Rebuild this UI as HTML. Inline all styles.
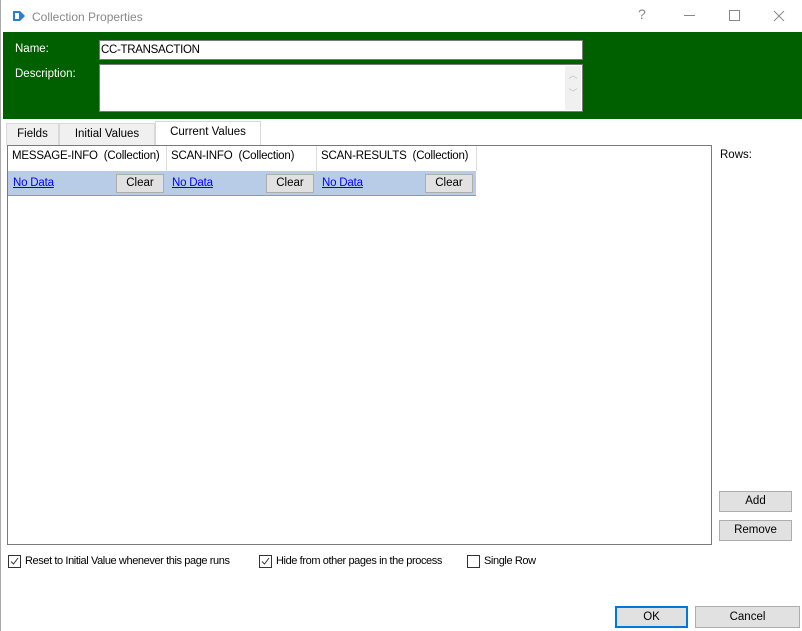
<!DOCTYPE html>
<html><head><style>
*{box-sizing:border-box}
body{margin:0;width:802px;height:631px;background:#fff;font-family:"Liberation Sans",sans-serif;font-size:11.5px;position:relative;overflow:hidden;color:#000}
.a{position:absolute}
.btn{position:absolute;background:#e1e1e1;border:1px solid #adadad;text-align:center;font-size:11.5px}
.tab{position:absolute;top:123px;height:22px;border:1px solid #d9d9d9;border-bottom:none;background:#f0f0f0;text-align:center;line-height:21px;font-size:11.5px}
.cb{position:absolute;top:555px;width:13px;height:13px;border:1px solid #333;background:#fff}
.lbl{position:absolute;top:555px;font-size:11px;letter-spacing:-0.4px}
a{color:#00f;text-decoration:underline}
.h{letter-spacing:-0.2px}
</style></head><body>
<div class="a" style="left:0;top:0;width:1px;height:631px;background:#aaa"></div>
<svg class="a" style="left:12px;top:9px" width="14" height="14"><path d="M1 2h7l5 5-5 5H1z" fill="#2a7fd4"/><rect x="3" y="4" width="4" height="6" fill="#fff"/></svg>
<div class="a" style="left:32px;top:10px;font-size:12px;color:#888">Collection Properties</div>
<div class="a" style="left:638px;top:6px;color:#888;font-size:14px">?</div>
<div class="a" style="left:684px;top:15px;width:11px;height:1px;background:#888"></div>
<div class="a" style="left:729px;top:10px;width:11px;height:11px;border:1px solid #888"></div>
<svg class="a" style="left:773px;top:10px" width="12" height="12"><path d="M1 1L11 11M11 1L1 11" stroke="#888"/></svg>
<div class="a" style="left:3px;top:32px;width:799px;height:87px;background:#006000"></div>
<div class="a" style="left:15px;top:43px;color:#fff">Name:</div>
<div class="a" style="left:15px;top:68px;color:#fff">Description:</div>
<div class="a" style="left:99px;top:40px;width:484px;height:20px;background:#fff;border:1px solid #7a7a7a;padding:2px 1px;line-height:14px;letter-spacing:-0.3px">CC-TRANSACTION</div>
<div class="a" style="left:99px;top:64px;width:484px;height:48px;background:#fff;border:1px solid #7a7a7a"></div>
<div class="a" style="left:565px;top:66px;width:16px;height:44px;background:#f0f0f0;color:#c0c0c0;font-size:9px;text-align:center;line-height:18px">︿<br>﹀</div>
<div class="tab" style="left:6px;width:53px">Fields</div>
<div class="tab" style="left:59px;width:96px">Initial Values</div>
<div class="tab" style="left:155px;width:106px;top:121px;height:25px;background:#fff;line-height:20px">Current Values</div>
<div class="a" style="left:7px;top:145px;width:705px;height:400px;border:1px solid #7a7a7a;background:#fff"></div>
<div class="a" style="left:8px;top:146px;width:468px;height:25px;background:#fff"></div>
<div class="a h" style="left:12px;top:150px">MESSAGE-INFO&nbsp; (Collection)</div>
<div class="a h" style="left:171px;top:150px">SCAN-INFO&nbsp; (Collection)</div>
<div class="a h" style="left:321px;top:150px">SCAN-RESULTS&nbsp; (Collection)</div>
<div class="a" style="left:166px;top:146px;width:1px;height:50px;background:#ddd"></div>
<div class="a" style="left:316px;top:146px;width:1px;height:50px;background:#ddd"></div>
<div class="a" style="left:476px;top:146px;width:1px;height:25px;background:#ddd"></div>
<div class="a" style="left:8px;top:171px;width:468px;height:25px;background:#b8cce8;border-bottom:1px solid #999"></div>
<div class="a h" style="left:13px;top:177px"><a>No Data</a></div>
<div class="a h" style="left:172px;top:177px"><a>No Data</a></div>
<div class="a h" style="left:322px;top:177px"><a>No Data</a></div>
<div class="btn" style="left:116px;top:174px;width:48px;height:19px;line-height:17px">Clear</div>
<div class="btn" style="left:266px;top:174px;width:48px;height:19px;line-height:17px">Clear</div>
<div class="btn" style="left:425px;top:174px;width:48px;height:19px;line-height:17px">Clear</div>
<div class="a" style="left:720px;top:149px">Rows:</div>
<div class="btn" style="left:719px;top:491px;width:73px;height:21px;line-height:19px">Add</div>
<div class="btn" style="left:719px;top:520px;width:73px;height:21px;line-height:19px">Remove</div>
<div class="cb" style="left:8px"><svg width="11" height="11" style="display:block"><path d="M2 5.5L4.5 8 9 2" stroke="#333" fill="none"/></svg></div>
<div class="lbl" style="left:25px">Reset to Initial Value whenever this page runs</div>
<div class="cb" style="left:259px"><svg width="11" height="11" style="display:block"><path d="M2 5.5L4.5 8 9 2" stroke="#333" fill="none"/></svg></div>
<div class="lbl" style="left:276px">Hide from other pages in the process</div>
<div class="cb" style="left:467px"></div>
<div class="lbl" style="left:484px">Single Row</div>
<div class="btn" style="left:615px;top:606px;width:73px;height:22px;line-height:18px;border:2px solid #0078d7">OK</div>
<div class="btn" style="left:695px;top:606px;width:105px;height:22px;line-height:20px">Cancel</div>
</body></html>
